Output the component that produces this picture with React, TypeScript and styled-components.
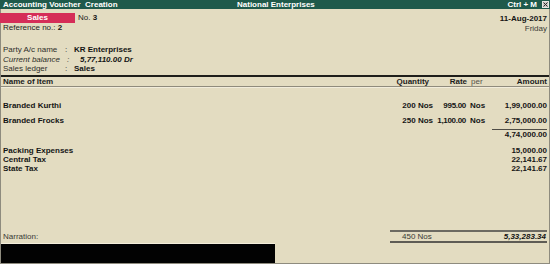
import React from "react";
import styled, { createGlobalStyle } from "styled-components";

const Global = createGlobalStyle`
  html, body { margin: 0; padding: 0; background: #e3dcc1; }
  body { font-family: "Liberation Sans", Arial, sans-serif; }
`;

const Screen = styled.div`
  width: 550px;
  height: 264px;
  overflow: hidden;
  display: flex;
  flex-direction: column;
  background: #e3dcc1;
  color: #1c1c1c;
  font-size: 8px;
`;

const TitleBar = styled.div`
  height: 9px;
  flex: none;
  display: grid;
  grid-template-columns: 234px 1fr auto auto;
  align-items: center;
  background: #1f5a4b;
  color: #ffffff;
  font-weight: bold;
  line-height: 9px;
  white-space: pre;
  padding-left: 3px;
`;

const Shortcut = styled.span`
  margin-right: 5px;
`;

const CloseBox = styled.span`
  width: 7px;
  height: 7px;
  margin-right: 1px;
  background: #c9c9c4;
  border: 1px solid #e8e8e4;
  display: flex;
  align-items: center;
  justify-content: center;
  box-sizing: border-box;
`;

const Frame = styled.div`
  flex: 1;
  display: flex;
  flex-direction: column;
  border-left: 1px solid #8e8b7e;
  border-right: 1px solid #8e8b7e;
  border-bottom: 1px solid #8e8b7e;
  min-height: 0;
`;

const VoucherHead = styled.div`
  display: flex;
  justify-content: space-between;
  padding: 4px 2px 0 0;
  margin-left: -1px;
`;

const HeadCol = styled.div<{ $right?: boolean }>`
  display: flex;
  flex-direction: column;
  align-items: ${(p) => (p.$right ? "flex-end" : "flex-start")};
  line-height: 10px;
  padding-top: ${(p) => (p.$right ? 1 : 0)}px;
`;

const TypeRow = styled.div`
  display: flex;
  align-items: center;
  height: 10px;
`;

const SalesTag = styled.div`
  width: 75px;
  height: 10px;
  background: #d52d58;
  color: #ffffff;
  font-weight: bold;
  text-align: center;
  line-height: 10px;
`;

const Plain = styled.span<{ $ml?: number; $muted?: boolean }>`
  margin-left: ${(p) => p.$ml ?? 0}px;
  color: ${(p) => (p.$muted ? "#3a3a36" : "#1c1c1c")};
`;

const Strong = styled.span<{ $italic?: boolean }>`
  font-weight: bold;
  font-style: ${(p) => (p.$italic ? "italic" : "normal")};
  color: #141414;
`;

const PartyGrid = styled.div`
  margin-top: 11px;
  padding-left: 2px;
  display: grid;
  grid-template-columns: 62px 9px 1fr;
  grid-auto-rows: 9.5px;
  line-height: 9.5px;
  color: #2e2e2a;
`;

const Italic = styled.span<{ $pad?: number }>`
  font-style: italic;
  padding-left: ${(p) => p.$pad ?? 0}px;
`;

const ThickRule = styled.div`
  margin-top: 1px;
  height: 2px;
  background: #1e1e1a;
  flex: none;
`;

const Cols = `
  display: grid;
  grid-template-columns: 1fr 60px 34px 22px 58px;
  padding: 0 2px 0 2px;
  align-items: center;
`;

const HeaderRow = styled.div`
  ${Cols}
  height: 9px;
  line-height: 9px;
  font-weight: bold;
  border-bottom: 1px solid #8f8b7d;
  box-shadow: 0 1px 0 #f1ecdb;
`;

const Per = styled.span`
  font-weight: normal;
  color: #55524a;
  padding-left: 4px;
`;

const Right = styled.span<{ $pr?: number; $tight?: boolean }>`
  text-align: right;
  padding-right: ${(p) => p.$pr ?? 0}px;
  letter-spacing: ${(p) => (p.$tight ? "-0.3px" : "0")};
`;

const Body = styled.div`
  flex: 1;
  padding-top: 14px;
  display: flex;
  flex-direction: column;
  font-weight: bold;
  color: #151515;
`;

const Row = styled.div<{ $mt?: number }>`
  ${Cols}
  height: 9px;
  line-height: 9px;
  margin-top: ${(p) => p.$mt ?? 0}px;
`;

const TotalCell = styled.span`
  grid-column: 5;
  text-align: right;
  border-top: 1px solid #4f4d46;
  margin-left: 3px;
  margin-top: -1px;
  line-height: 9px;
`;

const PerCell = styled.span`
  padding-left: 3px;
`;

const Footer = styled.div`
  flex: none;
  display: flex;
  flex-direction: column;
`;

const FooterRow = styled.div`
  display: grid;
  grid-template-columns: 1fr 157px;
  padding: 0 2px 0 2px;
  align-items: end;
`;

const NarrationLabel = styled.span`
  color: #3a3a36;
  line-height: 9px;
  padding-bottom: 2px;
`;

const TotalBox = styled.div`
  display: flex;
  justify-content: space-between;
  border-top: 2px solid #6c6a62;
  border-bottom: 2px solid #5e5c55;
  height: 9px;
  line-height: 10px;
  padding: 0 1px 0 12px;
`;

const QtyTotal = styled.span`
  color: #3a3a36;
`;

const BlackPanel = styled.div`
  width: 274px;
  height: 19px;
  background: #020202;
  border-top: 1px solid #f3eedc;
`;

const items = [
  { name: "Branded Kurthi", qty: "200 Nos", rate: "995.00", per: "Nos", amount: "1,99,000.00" },
  { name: "Branded Frocks", qty: "250 Nos", rate: "1,100.00", per: "Nos", amount: "2,75,000.00" },
];

const ledgers = [
  { name: "Packing Expenses", amount: "15,000.00" },
  { name: "Central Tax", amount: "22,141.67" },
  { name: "State Tax", amount: "22,141.67" },
];

export default function App() {
  return (
    <Screen>
      <Global />
      <TitleBar>
        <span>Accounting Voucher  Creation</span>
        <span>National Enterprises</span>
        <Shortcut>Ctrl + M</Shortcut>
        <CloseBox>
          <svg width="5" height="5" viewBox="0 0 5 5">
            <path d="M0.5 0.5 L4.5 4.5 M4.5 0.5 L0.5 4.5" stroke="#2a2a2a" strokeWidth="1" />
          </svg>
        </CloseBox>
      </TitleBar>
      <Frame>
        <VoucherHead>
          <HeadCol>
            <TypeRow>
              <SalesTag>Sales</SalesTag>
              <Plain $ml={3}>
                No. <Strong>3</Strong>
              </Plain>
            </TypeRow>
            <Plain $ml={3}>
              Reference no.: <Strong>2</Strong>
            </Plain>
          </HeadCol>
          <HeadCol $right>
            <Strong>11-Aug-2017</Strong>
            <Plain $muted>Friday</Plain>
          </HeadCol>
        </VoucherHead>
        <PartyGrid>
          <span>Party A/c name</span>
          <span>:</span>
          <Strong>KR Enterprises</Strong>
          <Italic>Current balance</Italic>
          <Italic $pad={2}>:</Italic>
          <Italic $pad={6}>
            <Strong $italic>5,77,110.00 Dr</Strong>
          </Italic>
          <span>Sales ledger</span>
          <span>:</span>
          <Strong>Sales</Strong>
        </PartyGrid>
        <ThickRule />
        <HeaderRow>
          <span>Name of Item</span>
          <Right $pr={4}>Quantity</Right>
          <Right>Rate</Right>
          <Per>per</Per>
          <Right>Amount</Right>
        </HeaderRow>
        <Body>
          {items.map((it, i) => (
            <Row key={it.name} $mt={i === 0 ? 0 : 6}>
              <span>{it.name}</span>
              <Right>{it.qty}</Right>
              <Right $pr={1} $tight>{it.rate}</Right>
              <PerCell>{it.per}</PerCell>
              <Right>{it.amount}</Right>
            </Row>
          ))}
          <Row $mt={5}>
            <TotalCell>4,74,000.00</TotalCell>
          </Row>
          {ledgers.map((l, i) => (
            <Row key={l.name} $mt={i === 0 ? 7 : 0}>
              <span>{l.name}</span>
              <span />
              <span />
              <span />
              <Right>{l.amount}</Right>
            </Row>
          ))}
        </Body>
        <Footer>
          <FooterRow>
            <NarrationLabel>Narration:</NarrationLabel>
            <TotalBox>
              <QtyTotal>450 Nos</QtyTotal>
              <Strong $italic>5,33,283.34</Strong>
            </TotalBox>
          </FooterRow>
          <BlackPanel />
        </Footer>
      </Frame>
    </Screen>
  );
}
